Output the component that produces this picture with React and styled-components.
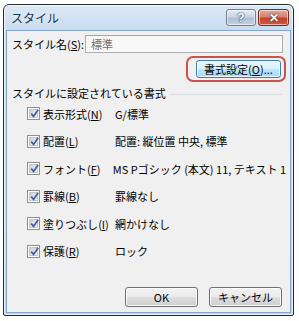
import styled, { createGlobalStyle } from "styled-components";

const Global = createGlobalStyle`
  body {
    margin: 0;
    background: #ffffff;
    font-family: "Noto Sans CJK JP", "Liberation Sans", sans-serif;
    font-size: 11px;
    color: #000;
  }
`;

const Window = styled.div`
  box-sizing: border-box;
  margin: 4px 0 0 3px;
  width: 291px;
  height: 312px;
  border: 1px solid #2a2a2a;
  border-radius: 6px 6px 2px 2px;
  background: linear-gradient(#dce9f6 0px, #c7daef 28px, #bcd3ec 100%);
  box-shadow: inset 0 0 0 1px rgba(255, 255, 255, 0.7);
  padding: 0 2px 2px 2px;
  display: flex;
  flex-direction: column;
`;

const TitleBar = styled.div`
  height: 25px;
  display: flex;
  align-items: center;
  padding: 0 2px 0 5px;
`;

const Title = styled.div`
  flex: 1;
  font-size: 12px;
  color: #17324f;
  text-shadow: 0 0 4px rgba(255, 255, 255, 0.9);
`;

const CaptionButton = styled.div`
  box-sizing: border-box;
  height: 17px;
  width: ${(p) => p.$w}px;
  margin-left: ${(p) => p.$gap || 0}px;
  border: 1px solid ${(p) => (p.$close ? "#7a2a1f" : "#6f7f95")};
  border-radius: 3px;
  background: ${(p) =>
    p.$close
      ? "linear-gradient(#e8a99c 0%, #d7826f 45%, #c0442c 55%, #d2593d 100%)"
      : "linear-gradient(#e4ecf5 0%, #c9d6e6 45%, #aebfd6 55%, #c4d3e6 100%)"};
  box-shadow: inset 0 0 0 1px rgba(255, 255, 255, 0.55);
  display: flex;
  align-items: center;
  justify-content: center;
  color: #fff;
  font-family: "Liberation Sans", sans-serif;
  font-weight: bold;
  font-size: 12px;
  text-shadow: 0 0 2px #2b3a52, 0 0 1px #2b3a52;
`;

const Body = styled.div`
  flex: 1;
  background: #f0f0f0;
  border: 1px solid #86a8cf;
  padding: 4px 4px 0 5px;
  display: flex;
  flex-direction: column;
`;

const NameRow = styled.div`
  display: flex;
  align-items: center;
  height: 18px;
`;

const NameLabel = styled.div`
  width: 73px;
`;

const NameInput = styled.div`
  box-sizing: border-box;
  width: 198px;
  height: 18px;
  border: 1px solid #abadb3;
  border-top-color: #a0a3aa;
  background: #f8f8f8;
  color: #6d6d6d;
  padding-left: 5px;
  display: flex;
  align-items: center;
`;

const HighlightRow = styled.div`
  display: flex;
  justify-content: flex-end;
  margin-top: 3px;
`;

const Highlight = styled.div`
  box-sizing: border-box;
  width: 100px;
  height: 26px;
  border: 2px solid #c9524c;
  border-radius: 7px;
  padding: 2px 3px 2px 8px;
  display: flex;
`;

const Button = styled.div`
  box-sizing: border-box;
  width: ${(p) => p.$w}px;
  height: ${(p) => p.$h}px;
  border: 1px solid ${(p) => (p.$focus ? "#3c7fb1" : "#707070")};
  border-radius: 3px;
  background: ${(p) =>
    p.$focus
      ? "linear-gradient(#eaf6fd 0%, #d9f0fc 48%, #bee6fd 52%, #a7d9f5 100%)"
      : "linear-gradient(#f2f2f2 0%, #ebebeb 48%, #dddddd 52%, #cfcfcf 100%)"};
  box-shadow: inset 0 0 0 1px rgba(255, 255, 255, 0.8);
  display: flex;
  align-items: center;
  justify-content: center;
  white-space: nowrap;
`;

const GroupHeader = styled.div`
  display: flex;
  align-items: center;
  margin-top: 3px;
  height: 15px;
`;

const GroupLine = styled.div`
  flex: 1;
  height: 1px;
  background: #d5dfe5;
  margin: 3px 4px 0 4px;
`;

const List = styled.div`
  display: flex;
  flex-direction: column;
`;

const Row = styled.div`
  height: 27.5px;
  display: flex;
  align-items: center;
  padding-left: 15px;
`;

const Box = styled.div`
  box-sizing: border-box;
  width: 13px;
  height: 13px;
  border: 1px solid #8e8f8f;
  background: #fff;
  padding: 1px;
  flex-shrink: 0;
`;

const BoxInner = styled.div`
  width: 9px;
  height: 9px;
  background: linear-gradient(135deg, #cbcfd5 0%, #f6f6f6 100%);
  border: 1px solid #c4c8ce;
  box-sizing: border-box;
  position: relative;
`;

const Check = styled.svg`
  position: absolute;
  left: -1px;
  top: -2px;
`;

const RowLabel = styled.div`
  width: 72px;
  margin-left: 3px;
  white-space: nowrap;
`;

const RowValue = styled.div`
  white-space: nowrap;
`;

const Footer = styled.div`
  margin-top: auto;
  margin-bottom: 5px;
  display: flex;
  justify-content: flex-end;
  gap: 11px;
  padding-right: 4px;
`;

const U = styled.span`
  text-decoration: underline;
  text-underline-offset: 1px;
`;

function CheckBox() {
  return (
    <Box>
      <BoxInner>
        <Check width="11" height="11" viewBox="0 0 11 11">
          <path
            d="M2.2 5.6 L4.6 8.4 L9.2 1.8"
            fill="none"
            stroke="#3b5aa8"
            strokeWidth="1.7"
          />
        </Check>
      </BoxInner>
    </Box>
  );
}

const rows = [
  { label: "表示形式", key: "N", value: "G/標準" },
  { label: "配置", key: "L", value: "配置: 縦位置 中央, 標準" },
  { label: "フォント", key: "F", value: "MS Pゴシック (本文) 11, テキスト 1" },
  { label: "罫線", key: "B", value: "罫線なし" },
  { label: "塗りつぶし", key: "I", value: "網かけなし" },
  { label: "保護", key: "R", value: "ロック" },
];

export default function App() {
  return (
    <>
      <Global />
      <Window>
        <TitleBar>
          <Title>スタイル</Title>
          <CaptionButton $w={30}>?</CaptionButton>
          <CaptionButton $w={31} $gap={2} $close>
            ✕
          </CaptionButton>
        </TitleBar>
        <Body>
          <NameRow>
            <NameLabel>
              スタイル名(<U>S</U>):
            </NameLabel>
            <NameInput>標準</NameInput>
          </NameRow>
          <HighlightRow>
            <Highlight>
              <Button $w={85} $h={18} $focus>
                書式設定(<U>O</U>)...
              </Button>
            </Highlight>
          </HighlightRow>
          <GroupHeader>
            スタイルに設定されている書式
            <GroupLine />
          </GroupHeader>
          <List>
            {rows.map((r) => (
              <Row key={r.key}>
                <CheckBox />
                <RowLabel>
                  {r.label}(<U>{r.key}</U>)
                </RowLabel>
                <RowValue>{r.value}</RowValue>
              </Row>
            ))}
          </List>
          <Footer>
            <Button $w={73} $h={20}>OK</Button>
            <Button $w={73} $h={20}>キャンセル</Button>
          </Footer>
        </Body>
      </Window>
    </>
  );
}
